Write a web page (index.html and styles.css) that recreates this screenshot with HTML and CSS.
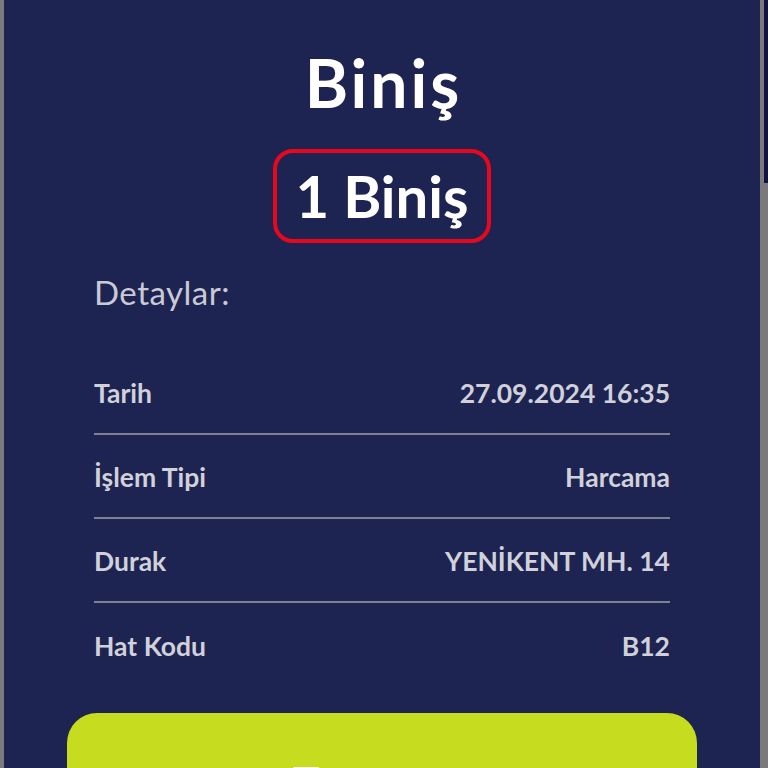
FILE: index.html
```html
<!DOCTYPE html>
<html lang="tr">
<head>
<meta charset="utf-8">
<link rel="stylesheet" href="styles.css">
</head>
<body>
<div class="screen">
  <div class="edge-left"></div>
  <main class="panel">
    <h1 class="title">Biniş</h1>
    <div class="count-box"><span class="count">1 Biniş</span></div>
    <h2 class="section">Detaylar:</h2>
    <div class="rows">
      <div class="row"><span class="label">Tarih</span><span class="value">27.09.2024 16:35</span></div>
      <div class="row"><span class="label">İşlem Tipi</span><span class="value">Harcama</span></div>
      <div class="row"><span class="label">Durak</span><span class="value">YENİKENT MH. 14</span></div>
      <div class="row last"><span class="label">Hat Kodu</span><span class="value">B12</span></div>
    </div>
    <div class="button"><span class="button-label">Tamam</span></div>
  </main>
  <div class="edge-right"><div class="edge-dark"></div></div>
</div>
</body>
</html>
```
FILE: styles.css
```css
html, body {
  margin: 0;
  padding: 0;
  height: 768px;
  overflow: hidden;
  background: #7a7a7c;
}
.screen {
  display: flex;
  height: 768px;
  font-family: "Lato", "Noto Sans", sans-serif;
}
.edge-left {
  width: 4px;
  flex: none;
  background: #7a7a7c;
}
.panel {
  width: 756px;
  flex: none;
  background: #1e2451;
  display: flex;
  flex-direction: column;
  align-items: center;
  overflow: hidden;
}
.edge-right {
  width: 8px;
  flex: none;
  background: #7a7a7c;
  display: flex;
  justify-content: flex-end;
}
.edge-dark {
  width: 4px;
  height: 183px;
  background: #12143c;
}
.title {
  margin: 44px 0 0;
  padding-left: 3px;
  font-size: 66px;
  line-height: 78px;
  font-weight: 700;
  color: #ffffff;
  letter-spacing: 3px;
}
.count-box {
  margin-top: 27px;
  border: 4px solid #e8081e;
  border-radius: 20px;
  height: 86px;
  width: 210px;
  display: flex;
  align-items: center;
  justify-content: center;
}
.count {
  font-size: 58px;
  line-height: 86px;
  font-weight: 700;
  color: #ffffff;
}
.section {
  align-self: stretch;
  margin: 29px 0 0 90px;
  font-size: 33px;
  line-height: 40px;
  font-weight: 400;
  color: #c9cad6;
  letter-spacing: 0.5px;
}
.rows {
  align-self: stretch;
  margin: 0 90px;
  padding-top: 39px;
  display: flex;
  flex-direction: column;
}
.row {
  display: flex;
  justify-content: space-between;
  align-items: center;
  height: 84px;
  padding-top: 2px;
  border-bottom: 2px solid #7d8190;
  font-size: 26.5px;
  font-weight: 700;
  color: #d0d1da;
  box-sizing: border-box;
}
.row.last {
  border-bottom: none;
}
.label, .value {
  line-height: 31px;
}
.button {
  align-self: stretch;
  margin: 26px 63px 0;
  padding-right: 38px;
  height: 120px;
  flex: none;
  border-radius: 30px;
  background: #c5dc1f;
  display: flex;
  justify-content: center;
}
.button-label {
  font-size: 44px;
  font-weight: 700;
  color: #ffffff;
  line-height: 53px;
  margin-top: 43px;
}
```
